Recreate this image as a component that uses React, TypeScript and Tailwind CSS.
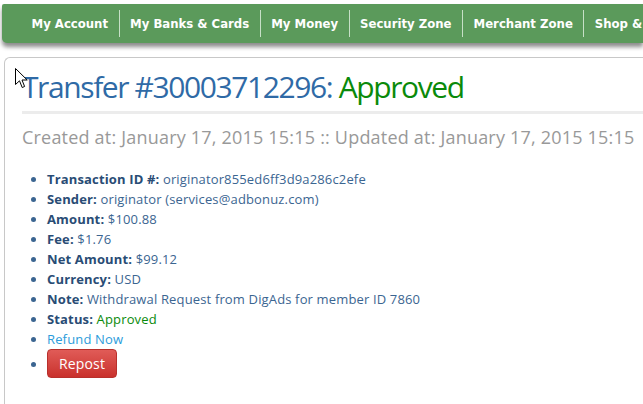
import React from "react";

const navItems = [
  "My Account",
  "My Banks & Cards",
  "My Money",
  "Security Zone",
  "Merchant Zone",
  "Shop & Earn",
];

const details: { label: string; value: string; tone?: "green" }[] = [
  { label: "Transaction ID #:", value: "originator855ed6ff3d9a286c2efe" },
  { label: "Sender:", value: "originator (services@adbonuz.com)" },
  { label: "Amount:", value: "$100.88" },
  { label: "Fee:", value: "$1.76" },
  { label: "Net Amount:", value: "$99.12" },
  { label: "Currency:", value: "USD" },
  { label: "Note:", value: "Withdrawal Request from DigAds for member ID 7860" },
  { label: "Status:", value: "Approved", tone: "green" },
];

function Cursor() {
  return (
    <svg
      className="absolute left-[15px] top-[68px]"
      width="13"
      height="22"
      viewBox="0 0 13 22"
    >
      <path
        d="M0.5 0.5 L0.5 16.5 L4.5 12.8 L7.2 19.5 L9.6 18.5 L7 12 L12.2 12 Z"
        fill="#fff"
        stroke="#000"
        strokeWidth="1"
      />
    </svg>
  );
}

export default function App() {
  return (
    <div className="relative w-[643px] h-[404px] overflow-hidden bg-white font-['Open_Sans',sans-serif]">
      <div className="pt-[4px] pl-[2px]">
        <nav className="flex items-center h-[39px] bg-[#5b9a5b] rounded-bl-[5px] rounded-tl-[2px] pl-[19px] shadow-[0_4px_4px_rgba(0,0,0,0.45)] whitespace-nowrap overflow-hidden">
          {navItems.map((item, i) => (
            <div
              key={item}
              className={
                "px-[10.5px] h-[27px] flex items-center text-white font-bold text-[13px] font-['DejaVu_Sans_Condensed','DejaVu_Sans',sans-serif] " +
                (i > 0 ? "border-l border-[#c7e0c7]" : "")
              }
            >
              {item}
            </div>
          ))}
        </nav>
      </div>

      <div className="mt-[14px] ml-[4px] h-[400px] border-l border-t border-[#c8c8c8] rounded-tl-[6px] pl-[17px] pt-[9px]">
        <h1 className="text-[30px] leading-[40px] text-[#2f6aa6] tracking-[-1.4px] whitespace-nowrap">
          Transfer #30003712296: <span className="text-[#0a8a0a]">Approved</span>
        </h1>
        <div className="mt-[4px] h-[3px] bg-[#ececec]" />
        <p className="mt-[11px] text-[18px] leading-[24px] text-[#999] whitespace-nowrap tracking-[0.2px]">
          Created at: January 17, 2015 15:15 :: Updated at: January 17, 2015 15:15
        </p>

        <ul className="mt-[20px] pl-[25px] list-disc marker:text-[#3b6591] text-[13px] leading-[20px] tracking-[0.15px] text-[#3b6591]">
          {details.map((d) => (
            <li key={d.label}>
              <span className="font-bold text-[#294c75]">{d.label}</span>{" "}
              <span className={d.tone === "green" ? "text-[#0a8a0a]" : ""}>
                {d.value}
              </span>
            </li>
          ))}
          <li>
            <a className="text-[#2c9cdb]">Refund Now</a>
          </li>
          <li>
            <button className="h-[29px] px-[11px] rounded-[4px] border border-[#b8302c] bg-gradient-to-b from-[#e05b57] to-[#c9302c] text-white text-[14px]">
              Repost
            </button>
          </li>
        </ul>
      </div>

      <Cursor />
    </div>
  );
}
